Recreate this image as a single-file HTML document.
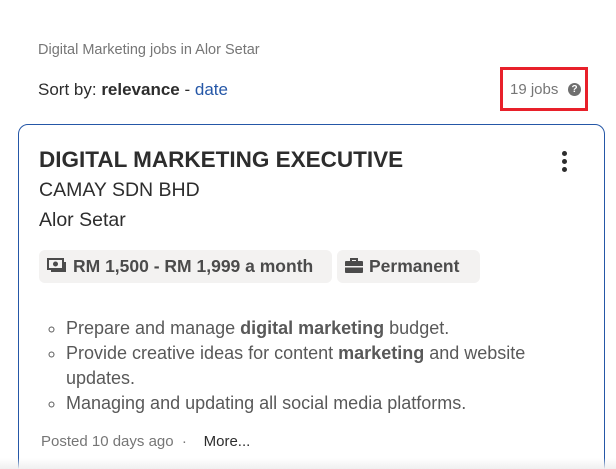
<!DOCTYPE html>
<html><head><style>
html,body{margin:0;width:616px;height:469px;overflow:hidden}
body{background:#fff;font-family:"Liberation Sans",sans-serif;position:relative;color:#2d2d2d}
.a{position:absolute;white-space:nowrap}
.tag{position:absolute;top:250px;height:33px;background:#f3f2f1;border-radius:6px;font-weight:bold;font-size:17.5px;color:#4b4b4b;line-height:33px;box-sizing:border-box;padding-left:8px}
ul{position:absolute;left:24px;top:316px;margin:0;padding-left:42px;font-size:18px;line-height:25px;color:#595959;list-style:circle;width:490px}
ul b{color:#595959}
</style></head><body>
<div class="a" style="left:38px;top:42px;font-size:14.5px;color:#767676">Digital Marketing jobs in Alor Setar</div>
<div class="a" style="left:38px;top:80px;font-size:17px;color:#2d2d2d">Sort by: <b>relevance</b> - <span style="color:#2557a7">date</span></div>
<div class="a" style="left:500px;top:67px;width:82px;height:38px;border:3px solid #e8202a"></div>
<div class="a" style="left:510px;top:81px;font-size:15px;color:#767676">19 jobs</div>
<div class="a" style="left:568px;top:83px;width:13px;height:13px;border-radius:50%;background:#6f6f6f;color:#fff;font-size:10px;font-weight:bold;text-align:center;line-height:13px">?</div>
<div class="a" style="left:18px;top:124px;width:585px;height:360px;border:1px solid #2557a7;border-radius:10px"></div>
<div class="a" style="left:39px;top:147px;font-size:22.5px;font-weight:bold;color:#2d2d2d">DIGITAL MARKETING EXECUTIVE</div>
<div class="a" style="left:562px;top:151px;width:5px;height:5px;border-radius:50%;background:#2d2d2d;box-shadow:0 8px 0 #2d2d2d,0 16px 0 #2d2d2d"></div>
<div class="a" style="left:39px;top:179px;font-size:19.5px;color:#2d2d2d">CAMAY SDN BHD</div>
<div class="a" style="left:39px;top:209px;font-size:19.5px;color:#2d2d2d">Alor Setar</div>
<div class="tag" style="left:39px;width:293px"><svg width="20" height="16" viewBox="0 0 20 16" style="vertical-align:-2px;margin-right:6px"><rect x="1" y="1" width="15" height="10" fill="none" stroke="#4b4b4b" stroke-width="2"/><circle cx="8.5" cy="6" r="2.5" fill="#4b4b4b"/><path d="M18 4v9H4" fill="none" stroke="#4b4b4b" stroke-width="2"/></svg>RM 1,500 - RM 1,999 a month</div>
<div class="tag" style="left:337px;width:143px"><svg width="18" height="16" viewBox="0 0 18 16" style="vertical-align:-2px;margin-right:6px"><path d="M6 3V1h6v2" fill="none" stroke="#4b4b4b" stroke-width="2"/><rect x="0" y="3" width="18" height="12" rx="1" fill="#4b4b4b"/><rect x="0" y="8" width="18" height="1.5" fill="#f3f2f1"/></svg>Permanent</div>
<ul>
<li>Prepare and manage <b>digital marketing</b> budget.</li>
<li>Provide creative ideas for content <b>marketing</b> and website updates.</li>
<li>Managing and updating all social media platforms.</li>
</ul>
<div class="a" style="left:41px;top:433px;font-size:15px;color:#767676">Posted 10 days ago &nbsp;·&nbsp; &nbsp; <span style="color:#2d2d2d">More...</span></div>
<div class="a" style="left:0;top:458px;width:616px;height:11px;background:linear-gradient(#fff0,#f0f0f0)"></div>
</body></html>
